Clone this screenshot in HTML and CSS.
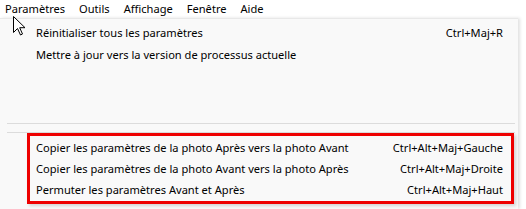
FILE: index.html
```html
<!DOCTYPE html>
<html lang="fr">
<head>
  <meta charset="UTF-8">
  <title>Paramètres</title>
  <link rel="stylesheet" href="styles.css">
</head>
<body>
  <div class="menubar">
    <span class="menu-item open">Paramètres</span>
    <span class="menu-item">Outils</span>
    <span class="menu-item">Affichage</span>
    <span class="menu-item">Fenêtre</span>
    <span class="menu-item">Aide</span>
  </div>

  <div class="dropdown">
    <div class="item"><span>Réinitialiser tous les paramètres</span><span class="key">Ctrl+Maj+R</span></div>
    <div class="item"><span>Mettre à jour vers la version de processus actuelle</span><span class="key"></span></div>
    <div class="spacer"></div>
    <div class="sep"></div>
    <div class="sep second"></div>
    <div class="highlight">
      <div class="item"><span>Copier les paramètres de la photo Après vers la photo Avant</span><span class="key">Ctrl+Alt+Maj+Gauche</span></div>
      <div class="item"><span>Copier les paramètres de la photo Avant vers la photo Après</span><span class="key">Ctrl+Alt+Maj+Droite</span></div>
      <div class="item"><span>Permuter les paramètres Avant et Après</span><span class="key">Ctrl+Alt+Maj+Haut</span></div>
    </div>
  </div>

  <svg class="cursor" width="13" height="20" viewBox="0 0 13 20">
    <path d="M0.5 0.5 L0.5 16.5 L4.5 12.5 L7.5 19 L9.5 18 L6.7 11.7 L12 11.7 Z" fill="#fff" stroke="#000" stroke-width="1"/>
  </svg>
</body>
</html>
```

FILE: styles.css
```css
body {
  margin: 0;
  width: 526px;
  height: 209px;
  overflow: hidden;
  background: #ffffff;
  font-family: "Noto Sans", "Open Sans", sans-serif;
  font-size: 11.1px;
  color: #000;
  position: relative;
}

.menubar {
  height: 18px;
  display: flex;
  align-items: center;
  background: #fff;
}

.menu-item {
  padding: 0 7px;
  line-height: 18px;
}

.menu-item.open {
  padding-left: 5px;
}

.dropdown {
  width: 518px;
  height: 191px;
  box-sizing: border-box;
  background: #f9f9f9;
  border-top: 1px solid #e8e8e8;
  padding-top: 3px;
  box-shadow: 2px 0 3px rgba(0, 0, 0, 0.12);
}

.item {
  display: flex;
  justify-content: space-between;
  height: 22px;
  line-height: 22px;
  padding: 0 15px 0 36px;
  white-space: nowrap;
}

.spacer {
  height: 57px;
}

.sep {
  height: 1px;
  margin: 0 3px 0 7px;
  background: #dcdcdc;
}

.sep.second {
  margin-top: 8px;
}

.highlight {
  margin: 0 4px 0 27px;
  border: 3px solid #ee0000;
  padding-top: 1px;
  height: 64px;
  box-sizing: content-box;
  box-shadow: 2px 2px 3px rgba(0, 0, 0, 0.15);
}

.highlight .item {
  height: 21px;
  line-height: 21px;
  padding: 0 8px 0 6px;
}

.cursor {
  position: absolute;
  left: 13px;
  top: 16px;
}
```
